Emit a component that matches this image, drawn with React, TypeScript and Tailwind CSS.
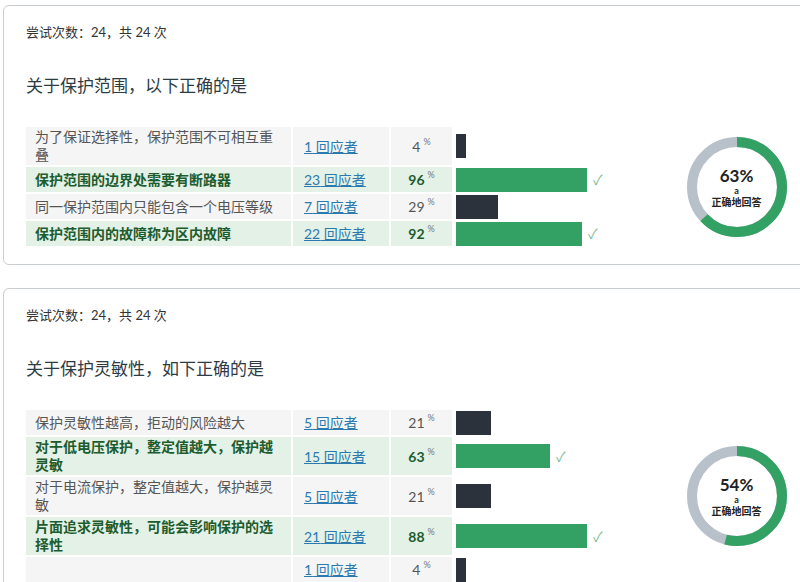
import React from 'react';

type Row = { label: string; n: number; pct: number; w: number; correct: boolean };

const q1: Row[] = [
  { label: '为了保证选择性，保护范围不可相互重叠', n: 1, pct: 4, w: 10, correct: false },
  { label: '保护范围的边界处需要有断路器', n: 23, pct: 96, w: 131, correct: true },
  { label: '同一保护范围内只能包含一个电压等级', n: 7, pct: 29, w: 42, correct: false },
  { label: '保护范围内的故障称为区内故障', n: 22, pct: 92, w: 126, correct: true },
];

const q2: Row[] = [
  { label: '保护灵敏性越高，拒动的风险越大', n: 5, pct: 21, w: 35, correct: false },
  { label: '对于低电压保护，整定值越大，保护越灵敏', n: 15, pct: 63, w: 94, correct: true },
  { label: '对于电流保护，整定值越大，保护越灵敏', n: 5, pct: 21, w: 35, correct: false },
  { label: '片面追求灵敏性，可能会影响保护的选择性', n: 21, pct: 88, w: 131, correct: true },
  { label: '', n: 1, pct: 4, w: 10, correct: false },
];

const Donut = ({ pct }: { pct: number }) => {
  const r = 45;
  const c = 2 * Math.PI * r;
  return (
    <div className="relative w-[104px] h-[104px]">
      <svg width="104" height="104" viewBox="0 0 104 104">
        <circle cx="52" cy="52" r={r} fill="none" stroke="#b8c0c9" strokeWidth="10" />
        <circle
          cx="52" cy="52" r={r} fill="none" stroke="#33a064" strokeWidth="10"
          strokeDasharray={`${(c * pct) / 100} ${c}`} transform="rotate(-90 52 52)"
        />
      </svg>
      <div className="absolute inset-0 flex flex-col items-center justify-center text-[#222]">
        <div className="text-[17px] font-bold leading-5">{pct}%</div>
        <div className="text-[9px] font-bold leading-[10px]">a</div>
        <div className="text-[10px] font-bold leading-3">正确地回答</div>
      </div>
    </div>
  );
};

const Card = ({ title, rows, pct }: { title: string; rows: Row[]; pct: number }) => (
  <div className="ml-[3px] mr-[-10px] border border-[#c7cdd1] rounded-md bg-white px-[22px] pt-[17px] pb-[18px]">
    <div className="text-[13px] text-[#333]">尝试次数：24，共 24 次</div>
    <div className="mt-[30px] text-[17px] text-[#2d3b45]">{title}</div>
    <div className="mt-[29px] flex items-center">
      <div className="flex flex-col gap-[2px] w-[600px]">
        {rows.map((r, i) => {
          const bg = r.correct ? 'bg-[#e3f1e7]' : 'bg-[#f5f5f5]';
          return (
            <div key={i} className="flex items-stretch gap-[2px] min-h-[25px] text-[14px]">
              <div className={`w-[265px] px-[9px] py-[1px] leading-[18px] flex items-center ${bg} ${r.correct ? 'font-bold text-[#1d5c2e]' : 'text-[#555]'}`}>
                {r.label}
              </div>
              <div className={`w-[96px] px-[11px] flex items-center ${bg}`}>
                <span className="text-[#2a7ab0] underline">{r.n} 回应者</span>
              </div>
              <div className={`w-[61px] flex items-center justify-center ${bg} ${r.correct ? 'font-bold text-[#1d5c2e]' : 'text-[#555]'}`}>
                {r.pct}<sup className="ml-[3px] text-[9px] font-normal text-[#777]">%</sup>
              </div>
              <div className="flex-1 flex items-center pl-[2px]">
                <div className={`h-[24px] ${r.correct ? 'bg-[#33a064]' : 'bg-[#2b323b]'}`} style={{ width: `${r.w}px` }} />
                {r.correct && <span className="ml-[6px] text-[#7cc08f] text-[14px]">✓</span>}
              </div>
            </div>
          );
        })}
      </div>
      <div className="ml-[82px]"><Donut pct={pct} /></div>
    </div>
  </div>
);

export default function App() {
  return (
    <div className="w-[800px] h-[582px] overflow-hidden bg-white pt-[5px]" style={{ fontFamily: 'Lato, "Noto Sans CJK SC", sans-serif' }}>
      <Card title="关于保护范围，以下正确的是" rows={q1} pct={63} />
      <div className="h-[23px]" />
      <Card title="关于保护灵敏性，如下正确的是" rows={q2} pct={54} />
    </div>
  );
}
